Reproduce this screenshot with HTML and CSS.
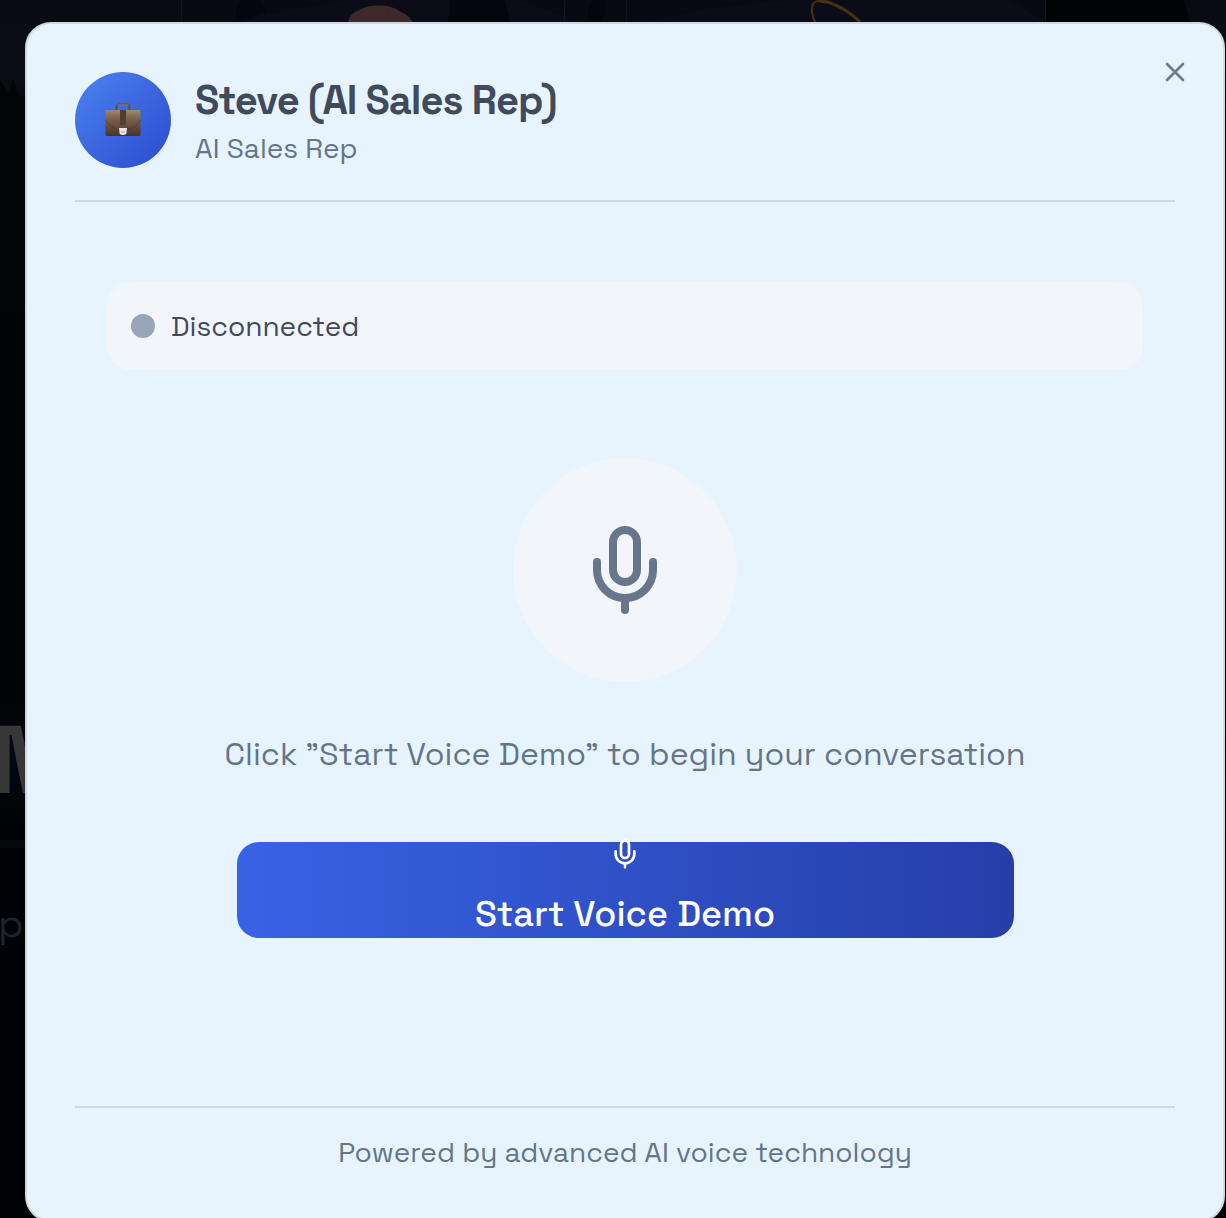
FILE: index.html
```html
<!DOCTYPE html>
<html lang="en">
<head>
<meta charset="utf-8">
<title>Steve (AI Sales Rep)</title>
<link rel="stylesheet" href="styles.css">
</head>
<body>
<div class="page">
  <div class="backdrop" aria-hidden="true">
    <svg class="scene" width="1226" height="1218" viewBox="0 0 1226 1218">
      <path fill="#080a12" d="M182 0H1046V22H182z"/>
      <path fill="#0c0c18" d="M240 22 292 9 350 0H520L580 22zM640 22 720 7 790 0H1010L1046 22z"/>
      <path fill="#03060d" d="M236 20 237 4 242 0H260L266 12 250 18zM450 0H505L510 22H448zM588 22V8L594 0H606V12L600 22z"/>
      <path fill="#020306" d="M1046 0H1184L1190 22H1046z"/>
      <path stroke="#14141e" d="M181.500 0V22M564.500 0V22M626.500 0V22M1045.500 0V22"/>
      <path fill="#020407" d="M0 80 4 86 8 94 13 78 17 92 21 98 25 94V310H0z"/>
      <path fill="#3b2b2b" d="M348 22C350 12 360 10 366 7 379 4 393 6 399 11 407 14 410 18 413 22z"/>
      <path fill="none" stroke="#4a2326" stroke-width="1.500" d="M353 22C355 15 359 15 362 13M365 22C364 14 369 12 374 10M377 22C374 15 379 12 383 12M389 22C391 16 388 13 386 9M400 22C401 18 397 15 394 12"/>
      <path fill="none" stroke="#46330f" stroke-width="2" d="M815 22C809 8 812 1 819 1"/>
      <path fill="none" stroke="#46330f" stroke-width="3" d="M819 1C832 1 849 11 860 22"/>
      <path fill="#060708" d="M0 840H25V848H0z"/>
    </svg>
    <span class="back-title">M</span>
    <span class="back-copy">p</span>
  </div>

  <main class="modal">
    <header class="header">
      <div class="avatar">
        <svg width="36" height="34" viewBox="0 0 36 34">
          <defs>
            <linearGradient id="leather" x2="0" y2="1"><stop stop-color="#a38770"/><stop offset=".3" stop-color="#80644f"/><stop offset=".7" stop-color="#60473a"/><stop offset="1" stop-color="#493328"/></linearGradient>
          </defs>
          <path d="M11.500 8V4Q11.500 1.500 14 1.500H22Q24.500 1.500 24.500 4V8" fill="none" stroke="#594c49" stroke-width="2"/>
          <path d="M12.500 2H23.500" stroke="#96705a" stroke-width="1.500"/>
          <rect x=".5" y="7" width="35" height="26" rx="1.500" fill="url(#leather)"/>
          <path d="M.5 17C4 24 11 27 18 27S32 24 35.500 17" fill="none" stroke="#49372f" stroke-opacity=".6"/>
          <path d="M15 7H21V22H15z" fill="#513d32"/>
          <path d="M14 25H22L21.300 31Q18 33 14.700 31z" fill="#e6e6e5"/>
          <path d="M16 29H20" stroke="#aaa"/>
        </svg>
      </div>
      <div class="identity">
        <h1 class="name">Steve (AI Sales Rep)</h1>
        <p class="role">AI Sales Rep</p>
      </div>
      <button class="close" aria-label="Close">
        <svg class="icon" width="32" height="32" viewBox="0 0 24 24"><path d="M18 6 6 18M6 6l12 12"/></svg>
      </button>
    </header>

    <section class="content">
      <div class="status"><span class="dot"></span><span class="status-text">Disconnected</span></div>
      <div class="mic-circle">
        <svg class="icon" width="96" height="96" viewBox="0 0 24 24"><path d="M12 2a3 3 0 0 0-3 3v7a3 3 0 0 0 6 0V5a3 3 0 0 0-3-3ZM19 10v2a7 7 0 0 1-14 0v-2M12 19v3"/></svg>
      </div>
      <p class="hint">Click ”Start Voice Demo” to begin your conversation</p>
      <button class="start">
        <svg class="icon" width="32" height="32" viewBox="0 0 24 24"><path d="M12 2a3 3 0 0 0-3 3v7a3 3 0 0 0 6 0V5a3 3 0 0 0-3-3ZM19 10v2a7 7 0 0 1-14 0v-2M12 19v3"/></svg>
        <span class="start-label">Start Voice Demo</span>
      </button>
    </section>

    <footer class="footer"><span class="powered">Powered by advanced AI voice technology</span></footer>
  </main>
</div>
</body>
</html>
```
FILE: styles.css
```css
* { box-sizing: border-box; }
body {
  margin: 0;
  font-family: "Space Grotesk", Inter, "Liberation Sans", sans-serif;
  color: #3f4a5d;
}
h1, p { margin: 0; }
button { border: 0; padding: 0; background: none; font: inherit; }
.page {
  position: relative;
  width: 1226px;
  height: 1218px;
  padding: 22px 1px 0 25px;
  overflow: hidden;
  background: #010205;
}
.backdrop {
  position: absolute;
  inset: 0;
  overflow: hidden;
  background: linear-gradient(#080b12 0, #0a0d14 80px, #020407 130px, #010309 300px, #020305 350px, #020305 700px, #040812 755px, #010205 830px, #010205);
}
.scene { display: block; }
.back-title {
  position: absolute;
  left: -9px;
  top: 703px;
  font-size: 96px;
  line-height: 115px;
  font-weight: 700;
  color: #373737;
}
.back-copy {
  position: absolute;
  left: -2px;
  top: 899px;
  font-size: 40px;
  line-height: 50px;
  color: #1c232d;
}
.icon {
  display: block;
  flex: none;
  fill: none;
  stroke: currentColor;
  stroke-width: 2;
  stroke-linecap: round;
  stroke-linejoin: round;
}
.modal {
  position: relative;
  display: flex;
  flex-direction: column;
  width: 1200px;
  height: 1200px;
  padding: 48px 48px 0;
  border: 2px solid #d0d7e3;
  border-radius: 26px;
  background: #e7f4fe;
}
.header {
  display: flex;
  flex: none;
  gap: 24px;
  height: 130px;
  border-bottom: 2px solid #d0d7e3;
}
.avatar {
  display: flex;
  align-items: center;
  justify-content: center;
  width: 96px;
  height: 96px;
  border-radius: 50%;
  background: linear-gradient(135deg, #4b83f0, #2b4acf);
}
.identity { flex: 1; white-space: nowrap; }
.name {
  padding-top: 4px;
  font-size: 40px;
  line-height: 50px;
  font-weight: 600;
  letter-spacing: -1px;
}
.role {
  padding-top: 2px;
  font-size: 28px;
  line-height: 40px;
  color: #64748b;
}
.close {
  width: 32px;
  height: 32px;
  margin: -16px -16px 0 0;
  color: #707b8c;
}
.content {
  display: flex;
  flex: none;
  flex-direction: column;
  align-items: center;
  height: 904px;
  padding: 80px 32px 0;
}
.status {
  display: flex;
  align-items: center;
  gap: 16px;
  width: 100%;
  height: 88px;
  padding: 0 24px;
  border-radius: 24px;
  background: #f2f5fa;
}
.dot {
  width: 24px;
  height: 24px;
  border-radius: 50%;
  background: #98a5b8;
}
.status-text { font-size: 28px; }
.mic-circle {
  display: flex;
  align-items: center;
  justify-content: center;
  width: 224px;
  height: 224px;
  margin-top: 88px;
  border-radius: 50%;
  background: #f2f5fa;
  color: #68768c;
}
.hint {
  margin-top: 48px;
  font-size: 32px;
  line-height: 48px;
  color: #64748b;
  white-space: nowrap;
}
.start {
  display: flex;
  flex-direction: column;
  align-items: center;
  width: 777px;
  height: 96px;
  margin-top: 64px;
  border-radius: 22px;
  background: linear-gradient(90deg, #3863e5, #263ea8);
  color: #fff;
}
.start .icon { margin-top: -4px; }
.start-label {
  margin-top: 16px;
  font-size: 36px;
  line-height: 56px;
  font-weight: 500;
}
.footer {
  flex: none;
  height: 90px;
  border-top: 2px solid #d0d9e5;
  padding-top: 24px;
  text-align: center;
  font-size: 28px;
  line-height: 40px;
  color: #64748b;
}
```
